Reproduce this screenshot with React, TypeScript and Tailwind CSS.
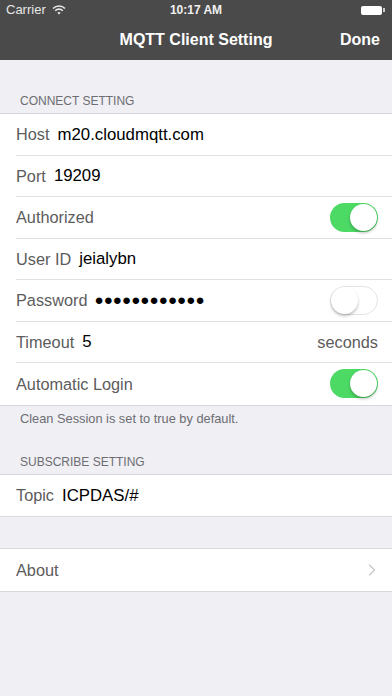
import { ChevronRight } from "lucide-react";

function Toggle({ on }: { on: boolean }) {
  return (
    <div
      className={
        on
          ? "relative w-[48px] h-[29px] rounded-full bg-[#4cd964]"
          : "relative w-[48px] h-[29px] rounded-full bg-white border border-[#e3e3e6]"
      }
    >
      <div
        className={
          on
            ? "absolute top-[1px] right-[1px] w-[27px] h-[27px] rounded-full bg-white shadow-[0_2px_3px_rgba(0,0,0,0.25)]"
            : "absolute top-[0px] left-[0px] w-[27px] h-[27px] rounded-full bg-white shadow-[0_2px_3px_rgba(0,0,0,0.25)]"
        }
      />
    </div>
  );
}

function Row({
  label,
  value,
  right,
  last,
  small,
}: {
  label: string;
  value?: string;
  right?: React.ReactNode;
  last?: boolean;
  small?: boolean;
}) {
  return (
    <div className="pl-4 bg-white">
      <div
        className={
          last
            ? "h-[41.5px] flex items-center pr-[14px]"
            : "h-[41.5px] flex items-center pr-[14px] border-b border-[#e0e0e4]"
        }
      >
        <span className="text-[16.3px] text-[#5c5c5c]">{label}</span>
        {value && (
          <span className={small ? "ml-[7px] text-[15.2px] text-black" : "ml-2 text-[16.8px] text-black"}>
            {value}
          </span>
        )}
        <div className="ml-auto flex items-center">{right}</div>
      </div>
    </div>
  );
}

export default function App() {
  return (
    <div className="w-[392px] h-[696px] bg-[#efeff4] font-['Liberation_Sans',Arial,sans-serif] overflow-hidden">
      <div className="bg-[#4a4a4a] text-white">
        <div className="h-[20px] flex items-center px-[6px] relative">
          <span className="text-[13px] text-[#e8e8e8]">Carrier</span>
          <svg width="14" height="10" viewBox="0 0 14 10" className="ml-[6px]">
            <path d="M1 3.5a8.5 8.5 0 0 1 12 0" stroke="#e8e8e8" strokeWidth="1.6" fill="none" />
            <path d="M3.2 5.7a5.4 5.4 0 0 1 7.6 0" stroke="#e8e8e8" strokeWidth="1.6" fill="none" />
            <path d="M5.3 7.8a2.4 2.4 0 0 1 3.4 0L7 9.6z" fill="#e8e8e8" />
          </svg>
          <span className="absolute left-0 right-0 text-center text-[12px] font-bold text-[#f0f0f0]">10:17 AM</span>
          <div className="ml-auto flex items-center mr-[1px]">
            <div className="w-[21px] h-[9px] bg-white rounded-[2px]" />
            <div className="w-[2px] h-[4px] bg-white/70 ml-[1px]" />
          </div>
        </div>
        <div className="h-[40px] flex items-center relative">
          <span className="absolute left-0 right-0 text-center text-[16px] font-bold">MQTT Client Setting</span>
          <span className="ml-auto mr-[12px] text-[16px] font-bold relative">Done</span>
        </div>
      </div>

      <div className="pt-[32px] pb-[3px] pl-[20px] text-[12px] text-[#6d6d72]">CONNECT SETTING</div>
      <div className="border-y border-[#d8d8dc]">
        <Row label="Host" value="m20.cloudmqtt.com" />
        <Row label="Port" value="19209" />
        <Row label="Authorized" right={<Toggle on />} />
        <Row label="User ID" value="jeialybn" />
        <Row
          label="Password"
          value="●●●●●●●●●●●●"
          small
          right={<Toggle on={false} />}
        />
        <Row label="Timeout" value="5" right={<span className="text-[16.3px] text-[#5c5c5c]">seconds</span>} />
        <Row label="Automatic Login" right={<Toggle on />} last />
      </div>
      <div className="pt-[3px] pl-[20px] text-[12.8px] text-[#6d6d72]">Clean Session is set to true by default.</div>

      <div className="pt-[25px] pb-[3px] pl-[20px] text-[12px] text-[#6d6d72]">SUBSCRIBE SETTING</div>
      <div className="border-y border-[#d8d8dc]">
        <Row label="Topic" value="ICPDAS/#" last />
      </div>

      <div className="h-[31px]" />
      <div className="border-y border-[#d8d8dc]">
        <Row
          label="About"
          right={<ChevronRight size={20} strokeWidth={1.5} className="text-[#c7c7cc] mr-[-4px]" />}
          last
        />
      </div>
    </div>
  );
}
